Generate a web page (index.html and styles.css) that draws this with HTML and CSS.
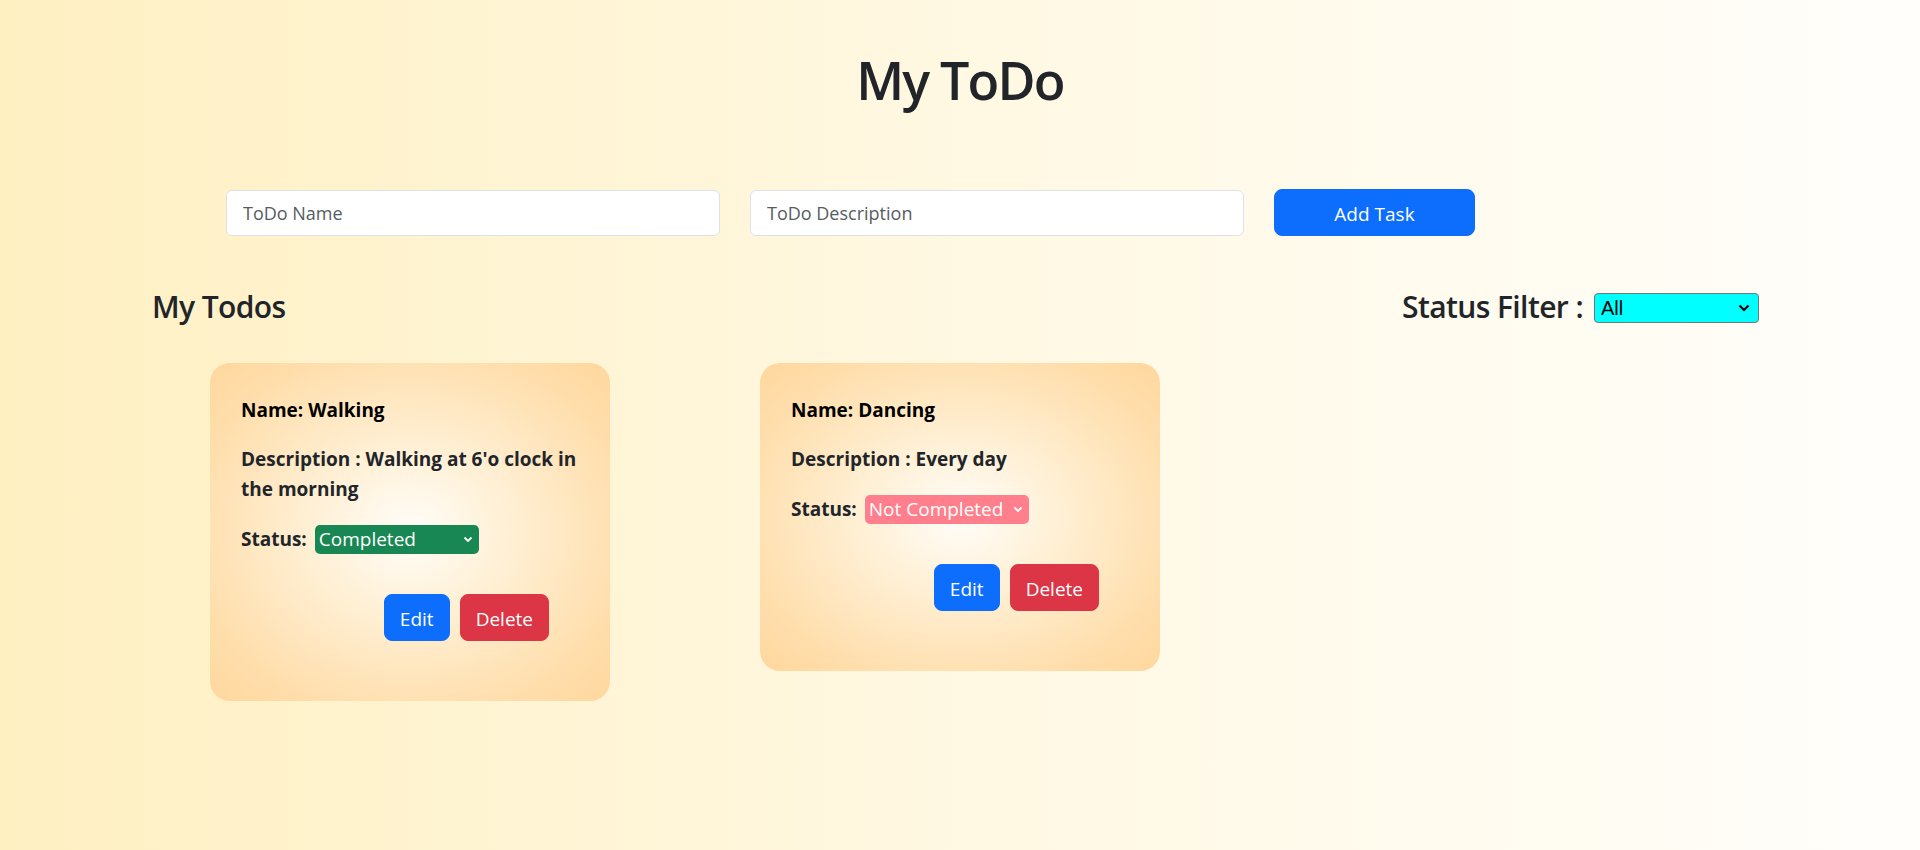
FILE: index.html
```html
<!DOCTYPE html>
<html lang="en">
<head>
<meta charset="utf-8">
<title>My ToDo</title>
<link rel="stylesheet" href="styles.css">
</head>
<body>
<div class="page">
  <h1 class="title">My ToDo</h1>

  <form class="add-form">
    <input class="field" type="text" placeholder="ToDo Name">
    <input class="field" type="text" placeholder="ToDo Description">
    <button type="button" class="btn btn-primary btn-add">Add Task</button>
  </form>

  <div class="list-head">
    <h2 class="list-title">My Todos</h2>
    <div class="filter">
      <h2 class="filter-label">Status Filter :</h2>
      <select class="filter-select">
        <option>All</option>
        <option>Completed</option>
        <option>Not Completed</option>
      </select>
    </div>
  </div>

  <div class="cards">
    <div class="card">
      <p class="card-name">Name: Walking</p>
      <p class="card-desc">Description : Walking at 6'o clock in the morning</p>
      <div class="card-status">
        <span class="status-label">Status:</span>
        <select class="status-select status-done">
          <option>Completed</option>
          <option>Not Completed</option>
        </select>
      </div>
      <div class="card-actions">
        <button type="button" class="btn btn-primary">Edit</button>
        <button type="button" class="btn btn-danger">Delete</button>
      </div>
    </div>

    <div class="card">
      <p class="card-name">Name: Dancing</p>
      <p class="card-desc">Description : Every day</p>
      <div class="card-status">
        <span class="status-label">Status:</span>
        <select class="status-select status-pending">
          <option>Not Completed</option>
          <option>Completed</option>
        </select>
      </div>
      <div class="card-actions">
        <button type="button" class="btn btn-primary">Edit</button>
        <button type="button" class="btn btn-danger">Delete</button>
      </div>
    </div>
  </div>
</div>
</body>
</html>
```

FILE: styles.css
```css
* {
  box-sizing: border-box;
}

html, body {
  margin: 0;
  padding: 0;
}

body {
  font-family: "Open Sans", "Noto Sans", "Liberation Sans", sans-serif;
  color: #212529;
  background: linear-gradient(to right, #fff0c2 0%, #fff8e2 50%, #fffefb 100%);
  min-height: 850px;
}

.page {
  min-height: 850px;
  padding-top: 49px;
}

.title {
  margin: 0;
  text-align: center;
  font-size: 52px;
  font-weight: 600;
  line-height: 1.2;
  letter-spacing: -1.8px;
  color: #212529;
}

.add-form {
  display: flex;
  align-items: center;
  gap: 30px;
  margin: 78px 0 0 226px;
}

.field {
  width: 494px;
  height: 46px;
  padding: 8px 16px;
  font-family: inherit;
  font-size: 18px;
  color: #212529;
  background: #fff;
  border: 1px solid #dee2e6;
  border-radius: 6px;
  outline: none;
}

.field::placeholder {
  color: #565c62;
}

.btn {
  font-family: inherit;
  font-size: 19px;
  line-height: 1.5;
  padding: 8px 15px;
  border: 1px solid transparent;
  border-radius: 8px;
  color: #fff;
  cursor: pointer;
}

.btn-primary {
  background: #0d6efd;
  border-color: #0d6efd;
}

.btn-danger {
  background: #dc3545;
  border-color: #dc3545;
}

.btn-add {
  width: 201px;
  height: 47px;
  padding-top: 8px;
  padding-bottom: 6px;
}

.list-head {
  display: flex;
  justify-content: space-between;
  align-items: center;
  margin-top: 53px;
  padding: 0 161px 0 152px;
}

.list-title,
.filter-label {
  margin: 0;
  font-size: 30px;
  font-weight: 600;
  line-height: 1.2;
  letter-spacing: -0.6px;
  color: #212529;
}

.filter {
  display: flex;
  align-items: center;
  gap: 11px;
}

.filter-select {
  appearance: none;
  -webkit-appearance: none;
  width: 165px;
  height: 30px;
  padding: 0 24px 0 6px;
  font-family: "Liberation Sans", Arial, sans-serif;
  font-size: 20px;
  color: #000;
  background-color: #00ffff;
  background-image: url("data:image/svg+xml;utf8,<svg xmlns='http://www.w3.org/2000/svg' width='12' height='8' viewBox='0 0 12 8'><path d='M1.5 1.5 L6 6 L10.5 1.5' fill='none' stroke='black' stroke-width='2.2'/></svg>");
  background-repeat: no-repeat;
  background-position: right 8px center;
  border: 1px solid #767676;
  border-radius: 4px;
  margin-top: 1px;
}

.cards {
  display: flex;
  align-items: flex-start;
  gap: 150px;
  margin-top: 38px;
  padding-left: 210px;
}

.card {
  width: 400px;
  padding: 32px 30px 30px 31px;
  border-radius: 20px;
  background: radial-gradient(ellipse at center, #fffdf9 0%, #fff2da 30%, #ffdeac 78%, #ffd79d 100%);
}

.card p {
  margin: 0 0 19px;
  font-size: 19px;
  font-weight: 700;
  line-height: 30px;
}

.card-name {
  color: #000;
}

.card-desc {
  color: #212529;
}

.card-status {
  display: flex;
  align-items: center;
  gap: 8px;
  height: 30px;
  margin-top: 20px;
}

.status-label {
  font-size: 19px;
  font-weight: 700;
  color: #212529;
}

.status-select {
  appearance: none;
  -webkit-appearance: none;
  width: 164px;
  height: 29px;
  padding: 0 20px 0 4px;
  font-family: inherit;
  font-size: 19px;
  color: #fff;
  border: none;
  border-radius: 5px;
  background-image: url("data:image/svg+xml;utf8,<svg xmlns='http://www.w3.org/2000/svg' width='10' height='7' viewBox='0 0 10 7'><path d='M1.5 1.5 L5 5 L8.5 1.5' fill='none' stroke='white' stroke-width='1.8'/></svg>");
  background-repeat: no-repeat;
  background-position: right 6px center;
}

.status-done {
  background-color: #198754;
}

.status-pending {
  background-color: #ff7f8c;
}

.card-actions {
  display: flex;
  justify-content: flex-end;
  gap: 10px;
  margin-top: 40px;
  margin-bottom: 30px;
  padding-right: 31px;
}

.card-actions .btn {
  height: 47px;
  padding-top: 8px;
  padding-bottom: 6px;
}
```
